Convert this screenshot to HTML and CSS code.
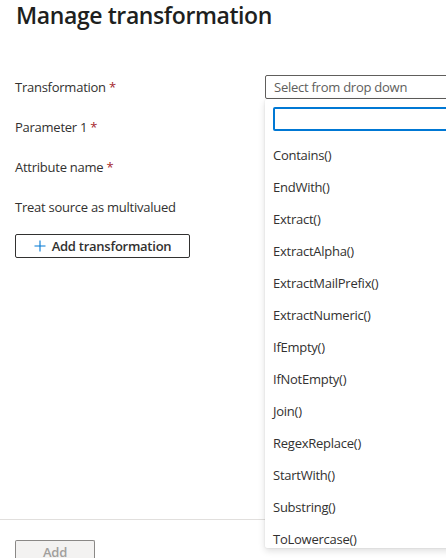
FILE: index.html
```html
<!DOCTYPE html>
<html lang="en">
<head>
<meta charset="utf-8">
<title>Manage transformation</title>
<link rel="stylesheet" href="styles.css">
</head>
<body>
<div class="page">
  <h1 class="title">Manage transformation</h1>
  <div class="form">
    <div class="row">
      <label class="label">Transformation <span class="req">*</span></label>
      <div class="control">
        <div class="select">Select from drop down</div>
      </div>
    </div>
    <div class="row">
      <label class="label">Parameter 1 <span class="req">*</span></label>
    </div>
    <div class="row">
      <label class="label">Attribute name <span class="req">*</span></label>
    </div>
    <div class="row">
      <label class="label">Treat source as multivalued</label>
    </div>
    <button class="btn-add-transform" type="button">
      <svg class="plus" width="12" height="12" viewBox="0 0 12 12"><path d="M6 0.5V11.5M0.5 6H11.5" stroke="#0078d4" stroke-width="1.1" fill="none"/></svg>
      <span>Add transformation</span>
    </button>
  </div>
  <div class="footer">
    <button class="btn-add" type="button" disabled>Add</button>
  </div>
  <div class="dropdown">
    <div class="search"></div>
    <ul class="options">
      <li>Contains()</li>
      <li>EndWith()</li>
      <li>Extract()</li>
      <li>ExtractAlpha()</li>
      <li>ExtractMailPrefix()</li>
      <li>ExtractNumeric()</li>
      <li>IfEmpty()</li>
      <li>IfNotEmpty()</li>
      <li>Join()</li>
      <li>RegexReplace()</li>
      <li>StartWith()</li>
      <li>Substring()</li>
      <li>ToLowercase()</li>
    </ul>
  </div>
</div>
</body>
</html>
```

FILE: styles.css
```css
html, body {
  margin: 0;
  padding: 0;
  background: #ffffff;
  overflow: hidden;
}
body {
  font-family: "Open Sans", "Noto Sans", "Liberation Sans", sans-serif;
  color: #323130;
  width: 446px;
  height: 558px;
  letter-spacing: -0.25px;
}
.page {
  position: relative;
  width: 446px;
  height: 558px;
  overflow: hidden;
}
.title {
  margin: 0;
  padding: 0 0 0 16px;
  font-size: 23px;
  font-weight: 600;
  line-height: 30px;
  height: 30px;
  color: #201f1e;
  letter-spacing: -0.4px;
}
.form {
  padding: 45px 0 0 15px;
}
.row {
  display: grid;
  grid-template-columns: 250px 300px;
  height: 40px;
  align-items: start;
}
.label {
  font-size: 13px;
  line-height: 24px;
  color: #323130;
}
.req {
  color: #a4262c;
}
.select {
  box-sizing: border-box;
  height: 24px;
  border: 1px solid #605e5c;
  border-radius: 2px;
  padding: 0 8px;
  font-size: 13px;
  line-height: 22px;
  color: #605e5c;
}
.btn-add-transform {
  margin-top: -1px;
  box-sizing: border-box;
  width: 175px;
  height: 24px;
  border: 1px solid #323130;
  border-radius: 2px;
  background: #ffffff;
  display: flex;
  align-items: center;
  justify-content: center;
  gap: 6px;
  padding: 0;
  font-family: inherit;
  letter-spacing: inherit;
  font-size: 13px;
  font-weight: 600;
  color: #323130;
}
.footer {
  position: absolute;
  left: 0;
  right: 0;
  top: 519px;
  border-top: 1px solid #e1dfdd;
  padding: 20px 0 0 15px;
}
.btn-add {
  box-sizing: border-box;
  width: 80px;
  height: 18px;
  border: 1px solid #8a8886;
  border-bottom: none;
  border-radius: 2px 2px 0 0;
  background: #f3f2f1;
  color: #a19f9d;
  font-family: inherit;
  letter-spacing: inherit;
  font-size: 13px;
  line-height: 18px;
  font-weight: 600;
  padding: 2px 0 0 0;
  vertical-align: top;
}
.dropdown {
  position: absolute;
  left: 265px;
  top: 99px;
  width: 300px;
  height: 449px;
  background: #ffffff;
  box-shadow: 0 3px 7px rgba(0,0,0,0.13), 0 0 2px rgba(0,0,0,0.11);
  border-radius: 2px;
  overflow: hidden;
  padding: 8px;
  box-sizing: border-box;
}
.search {
  box-sizing: border-box;
  height: 24px;
  border: 2px solid #0078d4;
  border-radius: 2px;
}
.options {
  list-style: none;
  margin: 8px 0 0 0;
  padding: 0;
}
.options li {
  height: 32px;
  line-height: 32px;
  font-size: 13px;
  color: #323130;
}
```
